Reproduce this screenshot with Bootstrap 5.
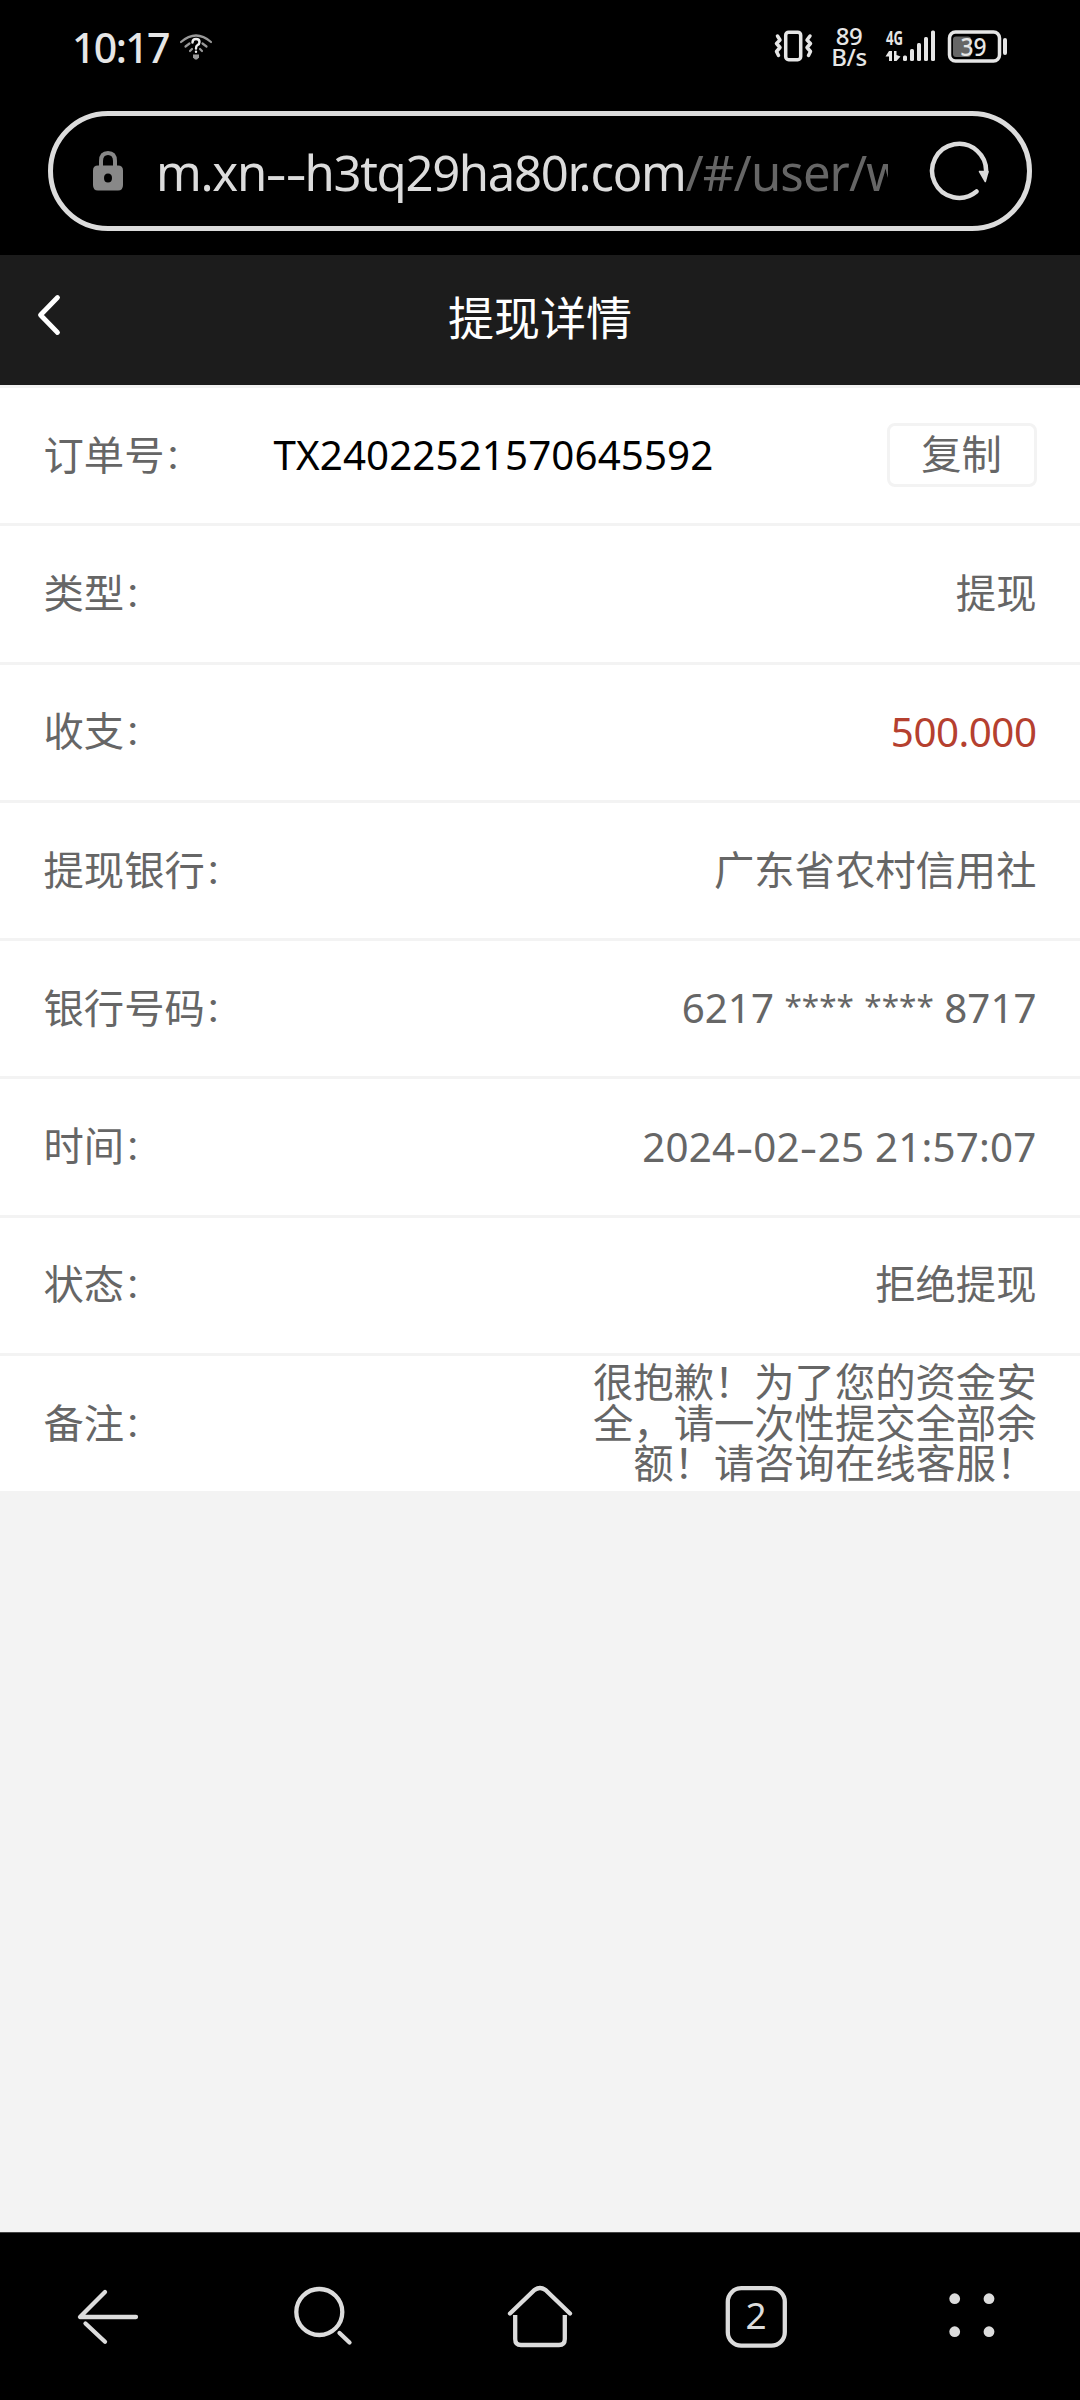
<!DOCTYPE html>
<html lang="zh-CN">
<head>
<meta charset="utf-8">
<meta name="viewport" content="width=device-width, initial-scale=1">
<title>提现详情</title>
<link href="https://cdn.jsdelivr.net/npm/bootstrap@5.3.0/dist/css/bootstrap.min.css" rel="stylesheet">
<style>
body{font-family:"Noto Sans","Noto Sans CJK SC",sans-serif;background:#f3f3f3;color:#666;overflow:hidden}
svg{display:block;flex:none}
.screen{width:1080px;height:2400px}
.statusbar{height:96px;padding:0 72px 0 72px;color:#e6e6e6}
.clock{font-size:41px;line-height:94px;height:96px;letter-spacing:-1.6px;font-weight:500}
.speed{font-size:24px;line-height:21px;width:36px;font-weight:500;padding-bottom:5px;letter-spacing:-.4px;margin-right:1px;margin-left:-1px}
.address{height:159px;padding:15px 48px 0}
.pill{height:120px;border:5px solid #dcdcdc;border-radius:60px;padding:0 38px 0 40px}
.url{font-size:49px;line-height:110px;width:732px;margin-left:33px;padding-top:2px;color:#dcdcdc;letter-spacing:-1.3px}
.url .path{color:#666;letter-spacing:-.9px}
.hy{display:inline-block;transform:scaleX(1.35);margin:0 2.4px}
.titlebar{height:130px;background:#1c1c1c;color:#fff}
.titlebar h1{font-family:"Noto Sans CJK SC",sans-serif;font-size:46px;font-weight:400;line-height:121px;padding-right:97px}
.cell{height:138.25px;border-top:3px solid #f3f3f3;padding:0 43.5px;font-size:40.32px;line-height:40.32px;background:#fff}
.cell .term,.zh{font-family:"Noto Sans CJK SC",sans-serif}
.cell .term{width:230px;padding-bottom:5px}
.cell span.zh{padding-bottom:5px}
.colon{font-size:34px;line-height:0;vertical-align:1px}
.copy{width:150px;height:64px;border:3px solid #f3f3f3;border-radius:8px;color:#666;font-size:40.32px;line-height:1;margin-bottom:1px}
.copy.zh{padding:0 0 5px}
.order{letter-spacing:.1px}
.amount{color:#b5402f;letter-spacing:-.5px}
.stars{font-size:31.5px;line-height:0;vertical-align:6px}
.stamp{letter-spacing:.2px}
.remark{width:444px}
.toolbar{height:168px;border-top:1px solid #444}
</style>
</head>
<body>
<div class="screen d-flex flex-column mx-auto">
  <header class="bg-black">
    <div class="statusbar d-flex align-items-center">
      <span class="clock">10:17</span>
      <svg class="ms-2" width="38" height="96" viewBox="177 0 38 96" fill="none" stroke="#999" stroke-width="2.2" stroke-linecap="round">
        <path d="M181 42Q196 29 211 42M185.500 46.500L189.500 43.500M206.500 46.500L202.500 43.500M190 51L192 49M202 51L200 49"/>
        <path d="M193 54.500H199V57.500L197 59.500H195L193 57.500Z" fill="#999" stroke="none"/>
        <path d="M192.500 42.500Q192.500 39 196 39Q199.500 39 199.500 42Q199.500 44.200 197.300 45.300Q196 46 196 48.500M196 51.600V51.800" stroke="#eee" stroke-width="2.400"/>
      </svg>
      <div class="ms-auto d-flex align-items-center">
        <svg width="60" height="96" viewBox="772 0 60 96" fill="none" stroke="#e6e6e6" stroke-width="3.500" stroke-linejoin="round">
          <rect x="785.700" y="32.200" width="15" height="27.500" rx="3"/>
          <path d="M777.500 36L780 40L776.500 43.500L780 47.500L776.500 51.500L778.500 55.500" stroke-linecap="round"/>
          <path d="M810 36L807 40L810.500 43.500L807 47.500L810.500 51.500L808.500 55.500" stroke-linecap="round"/>
        </svg>
        <div class="speed text-center">89<br>B/s</div>
        <svg width="140" height="96" viewBox="868 0 140 96">
          <text x="886" y="45" font-size="19" font-weight="700" textLength="17" lengthAdjust="spacingAndGlyphs" fill="#e6e6e6">4G</text>
          <g fill="#e6e6e6">
            <path d="M885.500 56.500L889 51H892V61H889V56.500ZM894 51H896.500V55L900.500 56.500L896.500 61H894Z"/>
            <rect x="903" y="55.500" width="4" height="5.500" rx="1.500"/><rect x="910" y="49" width="4" height="12" rx="1.500"/><rect x="917" y="43" width="4" height="18" rx="1.500"/><rect x="924" y="37" width="4" height="24" rx="1.500"/><rect x="931" y="30.500" width="4" height="30.500" rx="1.500"/>
            <rect x="1003" y="38" width="4" height="17" rx="2"/>
          </g>
          <rect x="953" y="36.500" width="18" height="20.500" rx="3" fill="#666"/>
          <rect x="949.500" y="32" width="50" height="29" rx="6" fill="none" stroke="#e6e6e6" stroke-width="3.500"/>
          <text x="960.500" y="55.500" font-size="25" font-weight="500" textLength="26" lengthAdjust="spacingAndGlyphs" fill="#e6e6e6">39</text>
        </svg>
      </div>
    </div>
    <div class="address">
      <div class="pill d-flex align-items-center">
        <svg width="30" height="40" viewBox="0 0 30 40"><path d="M8 17V10Q8 2 15 2Q22 2 22 10V17" fill="none" stroke="#888" stroke-width="4"/><path fill="#888" fill-rule="evenodd" d="M5 14.500H25Q30 14.500 30 19.500V34Q30 39.500 25 39.500H5Q0 39.500 0 34V19.500Q0 14.500 5 14.500ZM15 22.500Q11 22.500 11 27Q11 31.500 15 31.500Q19 31.500 19 27Q19 22.500 15 22.500Z"/></svg>
        <div class="url text-nowrap overflow-hidden"><span class="host">m.xn<span class="hy">-</span><span class="hy">-</span>h3tq29ha80r.com</span><span class="path">/#/user/w</span></div>
        <svg class="ms-auto" width="60" height="60" viewBox="930 141 60 60"><path d="M977.500 191.500A27 27 0 1 1 987 173" fill="none" stroke="#dcdcdc" stroke-width="4.500" stroke-linecap="round"/><path d="M980.500 171.500H989L986.300 181.500Z" fill="#dcdcdc" stroke="#dcdcdc" stroke-width="1.500" stroke-linejoin="round"/></svg>
      </div>
    </div>
  </header>
  <nav class="titlebar d-flex">
    <svg width="97" height="130" viewBox="0 255 97 130"><path d="M57.500 297.500L40.500 315L57.500 332.500" fill="none" stroke="#fff" stroke-width="4.800" stroke-linecap="round" stroke-linejoin="round"/></svg>
    <h1 class="flex-grow-1 text-center m-0">提现详情</h1>
  </nav>
  <main class="flex-grow-1">
    <div class="cell d-flex align-items-center"><span class="term">订单号<span class="colon">：</span></span><span class="order text-black">TX24022521570645592</span><button class="copy zh bg-white ms-auto">复制</button></div>
    <div class="cell d-flex align-items-center justify-content-between"><span class="term">类型<span class="colon">：</span></span><span class="zh">提现</span></div>
    <div class="cell d-flex align-items-center justify-content-between"><span class="term">收支<span class="colon">：</span></span><span class="amount">500.000</span></div>
    <div class="cell d-flex align-items-center justify-content-between"><span class="term">提现银行<span class="colon">：</span></span><span class="zh">广东省农村信用社</span></div>
    <div class="cell d-flex align-items-center justify-content-between"><span class="term">银行号码<span class="colon">：</span></span><span class="cardno">6217 <span class="stars">****</span> <span class="stars">****</span> 8717</span></div>
    <div class="cell d-flex align-items-center justify-content-between"><span class="term">时间<span class="colon">：</span></span><span class="stamp">2024<span class="hy">-</span>02<span class="hy">-</span>25 21:57:07</span></div>
    <div class="cell d-flex align-items-center justify-content-between"><span class="term">状态<span class="colon">：</span></span><span class="zh">拒绝提现</span></div>
    <div class="cell d-flex align-items-center justify-content-between"><span class="term">备注<span class="colon">：</span></span><span class="zh remark text-end">很抱歉！为了您的资金安全，请一次性提交全部余额！请咨询在线客服！</span></div>
  </main>
  <footer class="toolbar row row-cols-5 g-0 bg-black">
    <svg class="col" height="167" viewBox="0 2233 216 167" fill="none" stroke="#dcdcdc" stroke-width="4.300" stroke-linecap="round" stroke-linejoin="round"><path d="M105 2292L80 2317H136"/><path d="M85.500 2323.500L105 2341.800"/></svg>
    <svg class="col" height="167" viewBox="216 2233 216 167" fill="none" stroke="#dcdcdc" stroke-width="4.300" stroke-linecap="round"><circle cx="319.300" cy="2312" r="23"/><path d="M339.500 2333L349.500 2342.500"/></svg>
    <svg class="col" height="167" viewBox="432 2233 216 167" fill="none" stroke="#dcdcdc" stroke-width="4.300"><path d="M510 2313.500L534.500 2290Q540 2286 545.500 2290L570 2313.500" stroke-linecap="round"/><path d="M515.200 2315V2339Q515.200 2345 521 2345H559Q564.800 2345 564.800 2339V2315"/></svg>
    <svg class="col" height="167" viewBox="648 2233 216 167"><rect x="727.800" y="2288.200" width="57" height="57.500" rx="13.500" fill="none" stroke="#dcdcdc" stroke-width="4.300"/><text x="756" y="2329" font-size="37" text-anchor="middle" fill="#dcdcdc">2</text></svg>
    <svg class="col" height="167" viewBox="864 2233 216 167" fill="#dcdcdc"><circle cx="954.700" cy="2298.700" r="5.400"/><circle cx="989" cy="2298.700" r="5.400"/><circle cx="954.700" cy="2331.700" r="5.400"/><circle cx="989" cy="2331.700" r="5.400"/></svg>
  </footer>
</div>
<script src="https://cdn.jsdelivr.net/npm/bootstrap@5.3.0/dist/js/bootstrap.bundle.min.js"></script>
</body>
</html>
